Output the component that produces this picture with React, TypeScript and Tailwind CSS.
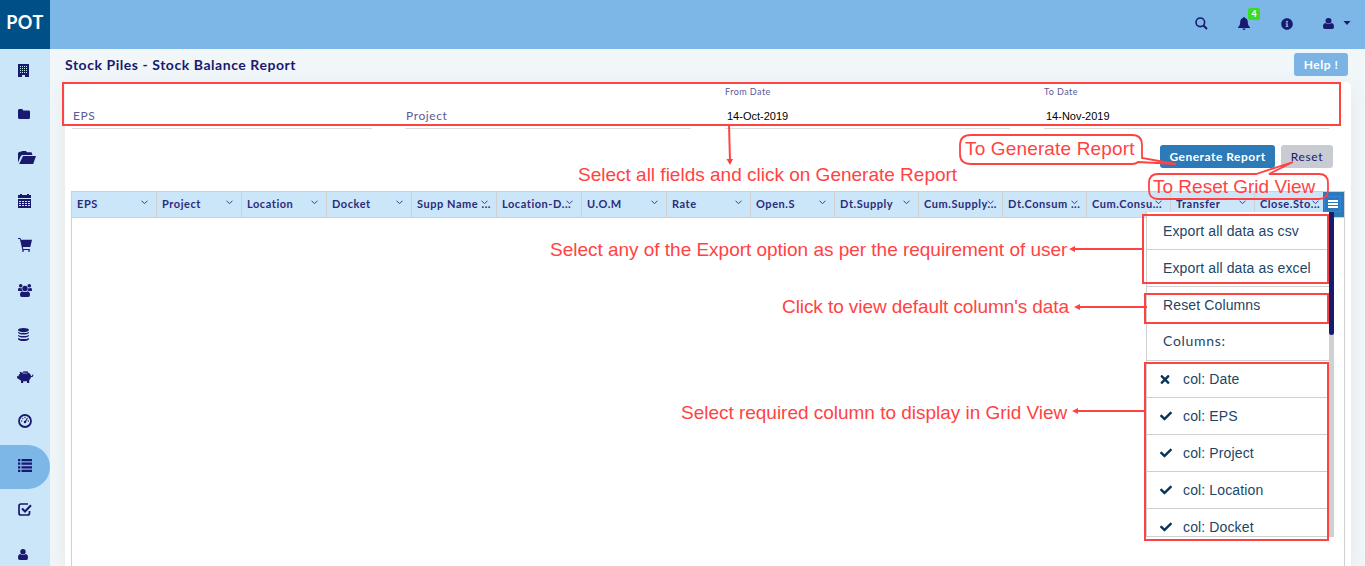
import React from "react";
import { FaCheck, FaTimes, FaInfoCircle } from "react-icons/fa";

const Building = () => (
  <svg width="11" height="13" viewBox="0 0 11 13" fill="currentColor">
    <path fillRule="evenodd" d="M0 0h11v13H7v-2H4v2H0zM2 2v1h1V2zm2 0v1h1V2zm2 0v1h1V2zm2 0v1h1V2zM2 4v1h1V4zm2 0v1h1V4zm2 0v1h1V4zm2 0v1h1V4zM2 6v1h1V6zm2 0v1h1V6zm2 0v1h1V6zm2 0v1h1V6zM2 8v1h1V8zm2 0v1h1V8zm2 0v1h1V8zm2 0v1h1V8z" />
  </svg>
);
const Folder = () => (
  <svg width="12" height="10" viewBox="0 0 12 10" fill="currentColor">
    <path d="M0 1.500Q0 0 1.300 0h2.500Q5 0 5 1.400h5.500Q12 1.400 12 2.800v5.700Q12 10 10.600 10H1.400Q0 10 0 8.600z" />
  </svg>
);
const FolderOpen = () => (
  <svg width="18" height="13" viewBox="0 0 18 13" fill="currentColor">
    <path d="M0 11.500V2L1.500.8H3L4 0h4l1 1.300h4.500L14.500 4H4.200L2.800 5zM5 5h13l-2.800 8H1.200z" />
  </svg>
);
const Calendar = () => (
  <svg width="13" height="14" viewBox="0 0 13 14" fill="currentColor">
    <path fillRule="evenodd" d="M0 1h2V0h2v1h5V0h2v1h2v3H0zM0 5h13v9H0zM1 7v1h2V7zm3 0v1h2V7zm3 0v1h2V7zm3 0v1h2V7zM1 9v1h2V9zm3 0v1h2V9zm3 0v1h2V9zm3 0v1h2V9zM1 11v1h2v-1zm3 0v1h2v-1zm3 0v1h2v-1zm3 0v1h2v-1z" />
  </svg>
);
const Cart = () => (
  <svg width="14" height="14" viewBox="0 0 14 14" fill="currentColor">
    <path d="M0 0h2.400L3.100 1.700H14L12.300 9H5l.2 1.900h6.600v1H4.400L1.900 1.100H0z" />
    <circle cx="5" cy="12.900" r=".9" /><circle cx="11" cy="12.900" r=".9" />
  </svg>
);
const Group = () => (
  <svg width="14" height="13" viewBox="0 0 14 13" fill="currentColor">
    <circle cx="2.700" cy="1.800" r="1.800" /><circle cx="11.300" cy="1.800" r="1.800" /><circle cx="7" cy="4.500" r="2.700" />
    <path d="M0 6.500C0 4.500.5 3.700 1.300 3.700q1.300.9 2.500.3Q3.500 5.800 4.500 7H1.200Q0 7 0 6.500zM14 6.500c0-2-.5-2.800-1.300-2.800q-1.300.9-2.500.3.300 1.800-.7 3h3.300q1.200 0 1.200-.5zM4.300 7.200Q7 9 9.700 7.200 12 7.600 12 11q0 2-1.800 2H3.800Q2 13 2 11q0-3.400 2.300-3.800z" />
  </svg>
);
const Piggy = () => (
  <svg width="17" height="13" viewBox="0 0 17 13" fill="currentColor">
    <path d="M0 5.200h1.300C1.700 4 2.300 3.200 3.200 2.600L2.600.7c1 0 1.900.4 2.500 1C7 .8 10.500.7 12.400 2.200c1 .8 1.500 1.700 1.700 2.700.8.2 1.300-.2 1.100-1.200l1-.3c.5 1.700-.5 2.800-2.200 2.700-.2 1.300-.8 2.300-1.800 3.100V12H10v-1.700H6.200V12H4V9.400C2.800 8.900 2 8.300 1.500 7.700L0 7.300z" />
    <path d="M6 1.200C7.500.5 9.500.5 11 1.200" fill="none" stroke="currentColor" />
    <path d="M6 2.500c1.500-.5 3-.5 4.200 0" fill="none" stroke="#cbe6f8" strokeWidth=".6" />
  </svg>
);
const Gauge = () => (
  <svg width="14" height="14" viewBox="0 0 14 14" fill="currentColor">
    <circle cx="7" cy="7" r="6" fill="none" stroke="currentColor" strokeWidth="1.800" />
    <circle cx="7" cy="8" r="1.200" /><path d="m6.600 7.700 2.500-4 .8.400-2 4.200z" />
    <circle cx="3.700" cy="7" r=".65" /><circle cx="4.700" cy="4.600" r=".65" /><circle cx="7" cy="3.500" r=".65" /><circle cx="10.300" cy="7" r=".65" />
  </svg>
);
const Database = () => (
  <svg width="11" height="13" viewBox="0 0 11 13" fill="currentColor">
    <ellipse cx="5.500" cy="2.100" rx="5.500" ry="2.100" />
    <path d="M0 3.900q5.500 2.400 11 0v.9Q10 6.600 5.500 6.600T0 4.800zM0 6.900q5.500 2.400 11 0v.9Q10 9.600 5.500 9.600T0 7.800zM0 9.900q5.500 2.400 11 0v1Q10 13 5.500 13T0 10.900z" />
  </svg>
);
const ListIcon = () => (
  <svg width="14" height="13" viewBox="0 0 14 13" fill="currentColor">
    <path d="M0 0h2.300v2.200H0zM3.500 0H14v2.200H3.500zM0 3.600h2.300v2.200H0zM3.500 3.600H14v2.200H3.500zM0 7.200h2.300v2.200H0zM3.500 7.200H14v2.200H3.500zM0 10.800h2.300V13H0zM3.500 10.800H14V13H3.500z" />
  </svg>
);
const CheckBox = () => (
  <svg width="14" height="13" viewBox="0 0 14 13" fill="none" stroke="currentColor">
    <path d="M10 1H3Q1 1 1 3v7q0 2 2 2h6.500q2 0 2-2V8" strokeWidth="1.700" />
    <path d="m4 5.500 3 3L13 2.200" strokeWidth="2.100" />
  </svg>
);
const User = ({ w = 10 }: { w?: number }) => (
  <svg width={w} height="11" viewBox="0 0 10 11" preserveAspectRatio="none" fill="currentColor">
    <circle cx="5" cy="2.700" r="2.700" />
    <path d="M2.200 5Q5 7.200 7.800 5C9.500 5.300 10 7 10 9q0 2-1.800 2H1.800Q0 11 0 9c0-2 .5-3.700 2.200-4z" />
  </svg>
);
const Bell = () => (
  <svg width="12" height="13" viewBox="0 0 12 13" fill="currentColor">
    <path d="M6 0c.6 0 .9.400.8.900C9 1.400 9.800 3 9.800 5c0 2.500.7 4 2.200 5.200v.8H0v-.8C1.500 9 2.200 7.500 2.200 5c0-2 .8-3.600 3-4.100C5.100.4 5.400 0 6 0zM4.500 11.500h3Q7.200 13 6 13t-1.500-1.500z" />
  </svg>
);
const Search = () => (
  <svg width="13" height="13" viewBox="0 0 13 13" fill="none" stroke="currentColor">
    <circle cx="5.300" cy="5.300" r="4.300" strokeWidth="1.600" /><path d="m8.500 8.500 3.500 3.500" strokeWidth="1.900" />
  </svg>
);
const Chevron = () => (
  <svg width="7" height="5" viewBox="0 0 7 5" fill="none" stroke="#3c3c8c" className="block"><path d="m.5.700 3 3 3-3" /></svg>
);

const nav = [
  { icon: <Building />, cls: "pb-px" },
  { icon: <Folder />, cls: "pb-[2px]" },
  { icon: <FolderOpen />, cls: "pb-[3px]" },
  { icon: <Calendar />, cls: "pb-[4px]" },
  { icon: <Cart />, cls: "pb-[4px]" },
  { icon: <Group />, cls: "pb-px" },
  { icon: <Database />, cls: "pb-px" },
  { icon: <Piggy />, cls: "-ml-px pb-[3px]" },
  { icon: <Gauge />, cls: "pb-[4px]" },
  { icon: <ListIcon />, cls: "rounded-r-full bg-[#7cb7e8] pb-[3px]" },
  { icon: <CheckBox />, cls: "pb-[3px]" },
  { icon: <User />, cls: "pb-px" },
];

const columns = ["EPS", "Project", "Location", "Docket", "Supp Name ...", "Location-D...", "U.O.M", "Rate", "Open.S", "Dt.Supply", "Cum.Supply...", "Dt.Consum ...", "Cum.Consu...", "Transfer", "Close.Sto..."];

const fields = [
  { label: "EPS", value: "", cls: "w-[300px] ml-[7px]" },
  { label: "Project", value: "", cls: "w-[286px] ml-[33px]" },
  { label: "From Date", value: "14-Oct-2019", cls: "w-[285px] ml-[34px]" },
  { label: "To Date", value: "14-Nov-2019", cls: "w-[285px] ml-[34px]" },
];

const menuCols = ["Date", "EPS", "Project", "Location", "Docket"];

const item = "flex h-[37px] shrink-0 items-center border-b border-[#d0d0d0] pl-4";
const note = "absolute whitespace-nowrap text-[19px] leading-[22px] text-[#ff4343]";

function GridMenu() {
  return (
    <div className="absolute right-[10px] top-[20px] flex h-[325px] w-[188px] overflow-hidden border-b border-l border-[#d0d0d0] bg-white font-['Liberation_Sans',sans-serif] text-[14px] tracking-[0.13px] text-[#1d4565]">
      <div className="flex flex-1 flex-col pt-px">
        <div className={item}>Export all data as csv</div>
        <div className={item}>Export all data as excel</div>
        <div className={item}>Reset Columns</div>
        <div className="flex h-[37px] shrink-0 items-center border-b border-[#d0d0d0] pb-[3px] pl-4 font-['Lato',sans-serif] tracking-[0.7px]">Columns:</div>
        {menuCols.map((c, i) => (
          <div key={c} className="flex h-[37px] shrink-0 items-center border-b border-[#d0d0d0] pl-3">
            <span className="flex w-6 items-center pl-px text-[#0b3558]">{i === 0 ? <FaTimes className="h-[13px] w-[10px]" /> : <FaCheck size={12} />}</span>
            col: {c}
          </div>
        ))}
      </div>
      <div className="w-[5px] bg-[#d0d0d0]">
        <div className="h-[123px] rounded-b-sm bg-[#191970]" />
      </div>
    </div>
  );
}

function Annotations() {
  return (
    <div className="pointer-events-none absolute inset-0 z-20 font-['Liberation_Sans',sans-serif]">
      <svg className="absolute inset-0" width="1365" height="566" fill="none" stroke="#ff4343" strokeWidth="2">
        <rect x="63" y="83" width="1277" height="42" />
        <rect x="1143" y="215" width="185" height="68" />
        <rect x="1145" y="294" width="183" height="29" />
        <rect x="1145" y="363" width="183" height="177" />
        <path d="M729 124l1 37M1143 249h-69M1147 307h-69M1145 411h-69" />
        <path d="m726.500 159 3.500 6 3-6zM1075 246v6l-6-3zM1080 304v6l-6-3zM1078 408v6l-6-3z" fill="#ff4343" stroke="none" />
        <path d="M971 135h161q10 0 10 10v13l34 6-38-2q-2 2-6 2H971q-11 0-11-10v-9q0-10 11-10z" strokeWidth="1.800" />
        <path d="M1158 174h98l37-12-24 12h50q9 0 9 9v7q0 9-9 9h-161q-9 0-9-9v-7q0-9 9-9z" strokeWidth="1.800" />
      </svg>
      <span className={note + " left-[578px] top-[164px]"}>Select all fields and click on Generate Report</span>
      <span className={note + " left-[965px] top-[138px] tracking-[0.15px]"}>To Generate Report</span>
      <span className={note + " left-[1153px] top-[176px]"}>To Reset Grid View</span>
      <span className={note + " left-[550px] top-[239px] tracking-[-0.02px]"}>Select any of the Export option as per the requirement of user</span>
      <span className={note + " left-[782px] top-[296px] tracking-[-0.08px]"}>Click to view default column's data</span>
      <span className={note + " left-[681px] top-[402px] tracking-[-0.02px]"}>Select required column to display in Grid View</span>
    </div>
  );
}

export default function App() {
  return (
    <div className="relative flex h-[566px] w-[1365px] overflow-hidden bg-[#f1f6f9] font-['Lato',sans-serif] text-[#191970]">
      <aside className="relative z-10 flex w-[50px] shrink-0 flex-col bg-[#cbe6f8]">
        <div className="flex h-[49px] shrink-0 items-center justify-center bg-[#004f87] pb-[4px] text-[18px] font-bold tracking-[0.5px] text-white">POT</div>
        {nav.map((n, i) => (
          <div key={i} className={"flex h-[44px] shrink-0 items-center pl-[18px] " + n.cls}>{n.icon}</div>
        ))}
      </aside>
      <div className="flex min-w-0 flex-1 flex-col">
        <header className="relative z-10 flex h-[49px] shrink-0 items-center justify-end bg-[#7cb7e8] pr-[15px] pb-[2px]">
          <Search />
          <div className="relative ml-[30px]">
            <Bell />
            <span className="absolute -top-[9px] left-[10px] flex h-[12px] w-[12px] items-center justify-center rounded-[2px] bg-[#3bdc24] pb-px text-[9px] font-bold text-white">4</span>
          </div>
          <FaInfoCircle className="ml-[31px]" size={12} />
          <span className="ml-[30px]"><User w={11} /></span>
          <svg className="-mr-[1px] ml-[9px]" width="8" height="5" viewBox="0 0 8 5" fill="currentColor"><path d="M.5 0h7L4 4z" /></svg>
        </header>
        <div className="relative z-10 flex h-[33px] shrink-0 items-center justify-between pl-[15px] pr-[17px]">
          <h1 className="pb-[2px] text-[14px] font-bold tracking-[0.55px]">Stock Piles - Stock Balance Report</h1>
          <button className="mt-[-2px] h-[23px] w-[54px] rounded-[3px] bg-[#7ab3e4] text-[12px] font-bold tracking-[0.5px] text-white">Help !</button>
        </div>
        <main className="ml-[15px] flex w-[1286px] flex-1 flex-col rounded-t-[5px] bg-white shadow-[0_5px_20px_0_#e0e9ea]">
          <div className="flex h-[47px]">
            {fields.map((f) => (
              <div key={f.label} className={"flex flex-col border-b border-[#dcdcdc] " + f.cls}>
                {f.value ? (
                  <>
                    <label className="mt-[4px] text-[9px] leading-[12px] tracking-[0.45px] text-[#5a5a9a]">{f.label}</label>
                    <span className="mt-[11px] pl-[2px] font-['Liberation_Sans',sans-serif] text-[11px] leading-[14px] text-black">{f.value}</span>
                  </>
                ) : (
                  <label className="mt-[26px] pl-px text-[12px] leading-[16px] tracking-[0.6px] text-[#5a5a9a]">{f.label}</label>
                )}
              </div>
            ))}
          </div>
          <div className="flex h-[62px] justify-end gap-[6px] pr-[18px] pt-[16px]">
            <button className="h-[23px] w-[115px] rounded-[3px] bg-[#2d7ab8] text-[12px] font-bold tracking-[0.5px] text-white">Generate Report</button>
            <button className="h-[23px] w-[52px] rounded-[3px] bg-[#c8cbd2] text-[12px] tracking-[0.6px]">Reset</button>
          </div>
          <section className="relative ml-[6px] flex w-[1274px] flex-1 flex-col border-x border-t border-[#d0d0d0]">
            <div className="flex h-[26px] border-b border-[#d0d0d0] bg-[#cbe6f8]">
              {columns.map((c, i) => (
                <div key={c} className={"relative flex shrink-0 items-center overflow-hidden whitespace-nowrap pl-[5px] text-[11px] font-bold tracking-[0.55px] text-[#2b2b7c] " + (i < 7 ? "w-[85px] border-r border-[#d0d0d0]" : i < 14 ? "w-[84px] border-r border-[#d0d0d0]" : "w-[68px]")}>
                  {c}
                  <span className={"absolute top-[8px] " + (i === 14 ? "right-[4px]" : "right-[8px]")}><Chevron /></span>
                </div>
              ))}
              <button className="flex flex-1 items-center justify-center bg-[#2d7ab8] pr-[2px] pb-[2px]">
                <span className="flex h-[16px] w-[17px] flex-col items-center justify-center gap-px border border-[#3484df]">
                  <i className="h-[2px] w-[10px] bg-white" /><i className="h-[2px] w-[10px] bg-white" /><i className="h-[2px] w-[10px] bg-white" />
                </span>
              </button>
            </div>
            <GridMenu />
          </section>
        </main>
      </div>
      <Annotations />
    </div>
  );
}
